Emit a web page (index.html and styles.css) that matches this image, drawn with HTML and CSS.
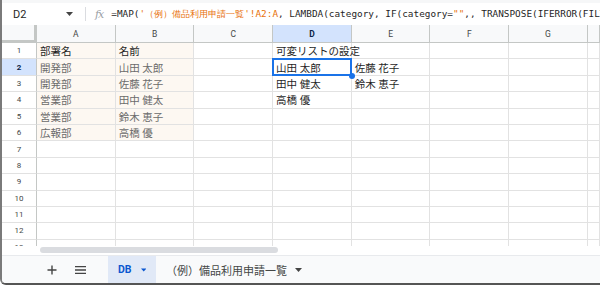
FILE: index.html
```html
<!DOCTYPE html>
<html lang="ja">
<head>
  <meta charset="UTF-8" />
  <title>DB</title>
  <link rel="stylesheet" href="styles.css">
</head>
<body>
  <div class="window">
    <div class="formula-bar">
      <div class="name-box">
        <span class="ref">D2</span>
        <svg class="caret" width="7" height="4" viewBox="0 0 7 4"><path d="M0 0h7L3.5 4z" fill="#444"/></svg>
      </div>
      <div class="fx">fx</div>
      <div class="formula">=MAP(<span class="str">'（例）備品利用申請一覧'!A2:A</span>, LAMBDA(category, IF(category=<span class="str">""</span>,, TRANSPOSE(IFERROR(FILTER(<span class="str">'（例）備品利用申請一覧'!B2:B</span>, category)))))</div>
    </div>

    <div class="sheet" id="sheet"></div>

    <div class="hscroll"><div class="thumb"></div></div>

    <div class="tabs">
      <div class="tab-btn">
        <svg width="10" height="10" viewBox="0 0 10 10"><path d="M5 0.5v9M0.5 5h9" stroke="#444" stroke-width="1.4"/></svg>
      </div>
      <div class="tab-btn">
        <svg width="11" height="8" viewBox="0 0 11 8"><path d="M0 0.7h11M0 4h11M0 7.3h11" stroke="#444" stroke-width="1.3"/></svg>
      </div>
      <div class="tab active">DB <svg width="7" height="4" viewBox="0 0 7 4"><path d="M0 0h7L3.5 4z" fill="#0b57d0"/></svg></div>
      <div class="tab">（例）備品利用申請一覧 <svg width="7" height="4" viewBox="0 0 7 4"><path d="M0 0h7L3.5 4z" fill="#444"/></svg></div>
    </div>
  </div>

  <script>
    const sheet = document.getElementById('sheet');
    const cols = ['A', 'B', 'C', 'D', 'E', 'F', 'G', ''];
    const rows = 13;

    const data = {
      A1: '部署名', B1: '名前', D1: '可変リストの設定',
      A2: '開発部', B2: '山田 太郎', D2: '山田 太郎', E2: '佐藤 花子',
      A3: '開発部', B3: '佐藤 花子', D3: '田中 健太', E3: '鈴木 恵子',
      A4: '営業部', B4: '田中 健太', D4: '高橋 優',
      A5: '営業部', B5: '鈴木 恵子',
      A6: '広報部', B6: '高橋 優'
    };

    function addCell(cls, text) {
      const div = document.createElement('div');
      div.className = cls;
      div.textContent = text || '';
      sheet.appendChild(div);
      return div;
    }

    addCell('corner');
    cols.forEach(c => {
      addCell('col-head' + (c === 'D' ? ' on' : ''), c);
    });

    for (let r = 1; r <= rows; r++) {
      addCell('row-head' + (r === 2 ? ' on' : ''), r);
      cols.forEach(c => {
        const key = c + r;
        let cls = 'cell';
        if ((c === 'A' || c === 'B') && r <= 6) cls += ' table';
        if (r === 1) cls += ' title';
        if (key === 'D2') cls += ' sel';
        addCell(cls, data[key]);
      });
    }
  </script>
</body>
</html>
```

FILE: styles.css
```css
body {
  margin: 0;
  font-family: Roboto, "Noto Sans CJK JP", sans-serif;
  background: #fff;
  overflow: hidden;
}

.window {
  width: 598px;
  height: 283px;
  border-left: 2px solid #7a7a7a;
  border-bottom: 2px solid #555;
  border-bottom-left-radius: 6px;
  overflow: hidden;
  display: flex;
  flex-direction: column;
}

/* formula bar */
.formula-bar {
  height: 25px;
  flex: none;
  display: flex;
  align-items: center;
  border-top: 3px solid #f6f7f8;
  box-sizing: border-box;
  white-space: nowrap;
}

.name-box {
  flex: none;
  width: 84px;
  display: flex;
  align-items: center;
  justify-content: space-between;
  padding: 0 12px 0 11px;
  box-sizing: border-box;
  border-right: 1px solid #dadce0;
  height: 14px;
}

.ref {
  font-size: 11px;
  color: #1f1f1f;
}

.fx {
  flex: none;
  font-family: "DejaVu Serif", serif;
  font-style: italic;
  font-size: 11px;
  color: #9aa0a6;
  margin: 0 8px 0 9px;
  letter-spacing: -1px;
}

.formula {
  font-family: "DejaVu Sans Mono", monospace;
  font-size: 9.4px;
  color: #1f1f1f;
  overflow: hidden;
}

.formula .str {
  color: #e8710a;
}

/* grid */
.sheet {
  height: 221px;
  flex: none;
  overflow: hidden;
  display: grid;
  grid-template-columns: 35px repeat(7, 78.7px) 1fr;
  grid-template-rows: 18px;
  grid-auto-rows: 16.4px;
}

.corner {
  background: #f8f9fa;
  border-right: 3px solid #c4c7c5;
  border-bottom: 3px solid #c4c7c5;
}

.col-head,
.row-head {
  background: #f8f9fa;
  color: #444746;
  font-size: 8.5px;
  display: flex;
  align-items: center;
  justify-content: center;
  border-right: 1px solid #c4c7c5;
  border-bottom: 1px solid #c4c7c5;
}

.row-head {
  font-size: 8px;
  background: #fff;
  border-right: 1px solid #c4c7c5;
  border-bottom: 1px solid #e1e1e1;
}

.col-head.on,
.row-head.on {
  background: #d3e3fd;
  color: #0b1f47;
  font-weight: bold;
}

.cell {
  border-right: 1px solid #e2e2e2;
  border-bottom: 1px solid #e2e2e2;
  font-size: 10.5px;
  color: #1f1f1f;
  padding: 0 3px;
  white-space: nowrap;
  display: flex;
  align-items: center;
  overflow: visible;
  min-width: 0;
}

.cell.table {
  background: #fdf8f2;
  color: #6b6b6b;
}

.cell.table.title {
  color: #1f1f1f;
}

.cell.sel {
  position: relative;
}

.cell.sel::after {
  content: "";
  position: absolute;
  top: -1px;
  left: -1px;
  right: -1px;
  bottom: -1px;
  border: 2px solid #1a73e8;
}

.cell.sel::before {
  content: "";
  position: absolute;
  right: -4px;
  bottom: -4px;
  width: 6px;
  height: 6px;
  border-radius: 50%;
  background: #1a73e8;
  z-index: 2;
}

/* scrollbar */
.hscroll {
  height: 9px;
  flex: none;
  padding: 1px 0 0 38px;
  box-sizing: border-box;
}

.thumb {
  width: 238px;
  height: 6px;
  border-radius: 3px;
  background: #dadce0;
}

/* sheet tabs */
.tabs {
  flex: 1;
  background: #f9fafb;
  border-top: 1px solid #e8eaed;
  display: flex;
  align-items: stretch;
  padding-left: 35px;
}

.tab-btn {
  width: 29px;
  display: flex;
  align-items: center;
  justify-content: center;
}

.tab {
  display: flex;
  align-items: center;
  gap: 8px;
  padding: 0 10px;
  font-size: 11px;
  color: #444746;
  white-space: nowrap;
}

.tab.active {
  margin-left: 13px;
  width: 48px;
  box-sizing: border-box;
  background: #e1e9f7;
  color: #0b57d0;
  font-weight: bold;
  font-size: 10.5px;
  gap: 9px;
}
```
